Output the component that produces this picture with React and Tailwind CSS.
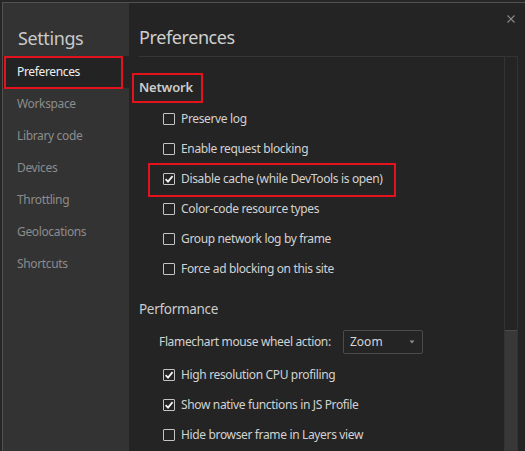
import React from "react";

const FONT = { fontFamily: '"Noto Sans", "Open Sans", sans-serif' };

const navItems = [
  "Preferences",
  "Workspace",
  "Library code",
  "Devices",
  "Throttling",
  "Geolocations",
  "Shortcuts",
];

const networkOptions = [
  { label: "Preserve log", checked: false },
  { label: "Enable request blocking", checked: false },
  { label: "Disable cache (while DevTools is open)", checked: true, marked: true },
  { label: "Color-code resource types", checked: false },
  { label: "Group network log by frame", checked: false },
  { label: "Force ad blocking on this site", checked: false },
];

const perfOptions = [
  { label: "High resolution CPU profiling", checked: true },
  { label: "Show native functions in JS Profile", checked: true },
  { label: "Hide browser frame in Layers view", checked: false },
];

const Checkbox = ({ checked }) => (
  <span className="w-[12px] h-[12px] border border-[#c4c4c4] rounded-[1px] flex items-center justify-center shrink-0">
    {checked && (
      <svg width="10" height="10" viewBox="0 0 10 10">
        <path d="M1.6 5.2 L4 7.6 L8.6 2.2" fill="none" stroke="#f2f2f2" strokeWidth="1.8" />
      </svg>
    )}
  </span>
);

const OptionRow = ({ label, checked, marked }) => (
  <div className="relative h-[30px] flex items-center gap-[6px] pl-[34px]">
    <Checkbox checked={checked} />
    <span className="text-[12px] tracking-[-0.35px] text-[#d2d2d2] leading-none">{label}</span>
    {/* annotation box */}
    {marked && (
      <div className="absolute left-[19px] top-[-1px] w-[248px] h-[34px] border-2 border-[#e4121c]" />
    )}
  </div>
);

export default function App() {
  return (
    <div className="w-[525px] h-[451px] bg-[#262626] overflow-hidden" style={FONT}>
      <div className="mt-[2px] ml-[2px] h-[449px] border-t border-l border-[#525252] flex">
        {/* Sidebar */}
        <aside className="w-[126px] bg-[#333333] flex flex-col shrink-0">
          <div className="pl-[15px] pt-[26px] h-[51px] text-[18px] tracking-[-0.4px] text-[#c9c9c9] leading-none">
            Settings
          </div>
          {navItems.map((item, i) =>
            i === 0 ? (
              <div key={item} className="relative h-[32px] mt-[2px] bg-[#232323] flex items-center pl-[14px] text-[12px] tracking-[-0.35px] text-[#f0f0f0]">
                {item}
                <div className="absolute left-[1px] top-[0px] w-[119px] h-[33px] border-2 border-[#e4121c]" />
              </div>
            ) : (
              <div key={item} className="h-[32px] flex items-center pl-[14px] text-[12px] tracking-[-0.35px] text-[#8c8c8c]">
                {item}
              </div>
            )
          )}
        </aside>

        {/* Main panel */}
        <main className="flex-1 bg-[#242424] relative flex flex-col">
          <div className="flex items-start justify-between h-[53px]">
            <div className="pl-[10px] pt-[25px] text-[18px] tracking-[-0.4px] text-[#cfcfcf] leading-none">Preferences</div>
            <button className="mr-[9px] mt-[11px] text-[#8a8a8a]">
              <svg width="10" height="10" viewBox="0 0 10 10">
                <path d="M1.5 1.5 L8.5 8.5 M8.5 1.5 L1.5 8.5" stroke="#8a8a8a" strokeWidth="1.2" />
              </svg>
            </button>
          </div>

          <div className="flex flex-1 min-h-0">
            <div className="flex-1 border-t border-[#363636] ml-[10px]">
              {/* Network */}
              <div className="relative h-[30px] mt-[16px] flex items-center">
                <span className="text-[13px] font-semibold tracking-[-0.2px] text-[#cccccc]">Network</span>
                <div className="absolute left-[-7px] top-[0px] w-[71px] h-[30px] border-2 border-[#e4121c]" />
              </div>
              <div className="ml-[-10px] mt-[1px]">
                {networkOptions.map((o) => (
                  <OptionRow key={o.label} {...o} />
                ))}
              </div>

              {/* Performance */}
              <div className="h-[30px] mt-[10px] flex items-center text-[13.5px] tracking-[-0.3px] text-[#cccccc]">
                Performance
              </div>
              <div className="flex items-center h-[32px] pl-[20px] mt-[2px]">
                <span className="text-[12px] tracking-[-0.35px] text-[#d2d2d2] w-[184px]">Flamechart mouse wheel action:</span>
                <div className="w-[80px] h-[24px] border border-[#4b4b4b] rounded-[2px] flex items-center justify-between pl-[6px] pr-[6px]">
                  <span className="text-[12px] text-[#d6d6d6]">Zoom</span>
                  <svg width="8" height="6" viewBox="0 0 8 6">
                    <path d="M1.5 1.5 L6.5 1.5 L4 4.5 Z" fill="#8d8d8d" />
                  </svg>
                </div>
              </div>
              <div className="ml-[-10px] mt-[2px]">
                {perfOptions.map((o) => (
                  <OptionRow key={o.label} {...o} />
                ))}
              </div>
            </div>

            {/* Scrollbar */}
            <div className="w-[14px] mr-[7px] border border-[#333333] flex flex-col">
              <div className="h-[273px]" />
              <div className="flex-1 bg-[#383838] border-t border-[#4a4a4a]" />
            </div>
          </div>
        </main>
      </div>
    </div>
  );
}
